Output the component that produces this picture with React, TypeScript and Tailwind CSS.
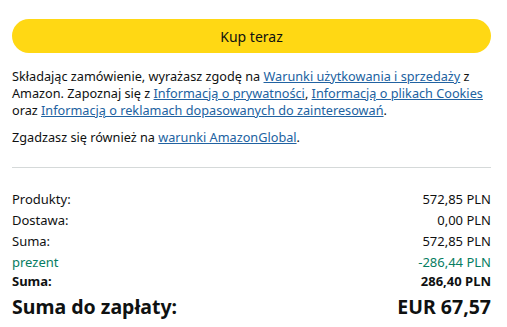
export default function App() {
  const rows = [
    { label: "Produkty:", value: "572,85 PLN" },
    { label: "Dostawa:", value: "0,00 PLN" },
    { label: "Suma:", value: "572,85 PLN" },
  ];

  return (
    <div className="w-[507px] h-[327px] bg-white text-[#0f1111] font-['Noto_Sans',sans-serif] pl-3 pr-4 pt-[19px] overflow-hidden">
      <button className="w-full h-[34px] rounded-full bg-[#ffd814] text-[14px] text-[#0f1111]">
        Kup teraz
      </button>

      <p className="mt-[15px] text-[12.7px] leading-[17px]">
        Składając zamówienie, wyrażasz zgodę na{" "}
        <a className="text-[#2162a1] underline">Warunki użytkowania i sprzedaży</a> z Amazon.
        Zapoznaj się z <a className="text-[#2162a1] underline">Informacją o prywatności</a>,{" "}
        <a className="text-[#2162a1] underline">Informacją o plikach Cookies</a> oraz{" "}
        <a className="text-[#2162a1] underline">
          Informacją o reklamach dopasowanych do zainteresowań
        </a>
        .
      </p>
      <p className="mt-[10px] text-[12.7px] leading-[17px]">
        Zgadzasz się również na{" "}
        <a className="text-[#2162a1] underline">warunki AmazonGlobal</a>.
      </p>

      <div className="mt-[21px] border-t border-[#d5d9d9]" />

      <div className="mt-[21px] text-[13px]">
        {rows.map((r) => (
          <div key={r.value + r.label} className="flex justify-between h-[21px] items-center">
            <span>{r.label}</span>
            <span>{r.value}</span>
          </div>
        ))}
        <div className="flex justify-between h-[21px] items-center text-[#067d62]">
          <span>prezent</span>
          <span>-286,44 PLN</span>
        </div>
        <div className="flex justify-between h-[17px] items-center font-bold">
          <span>Suma:</span>
          <span>286,40 PLN</span>
        </div>
        <div className="flex justify-between h-[34px] items-center font-bold text-[19.5px]">
          <span>Suma do zapłaty:</span>
          <span>EUR 67,57</span>
        </div>
      </div>
    </div>
  );
}
